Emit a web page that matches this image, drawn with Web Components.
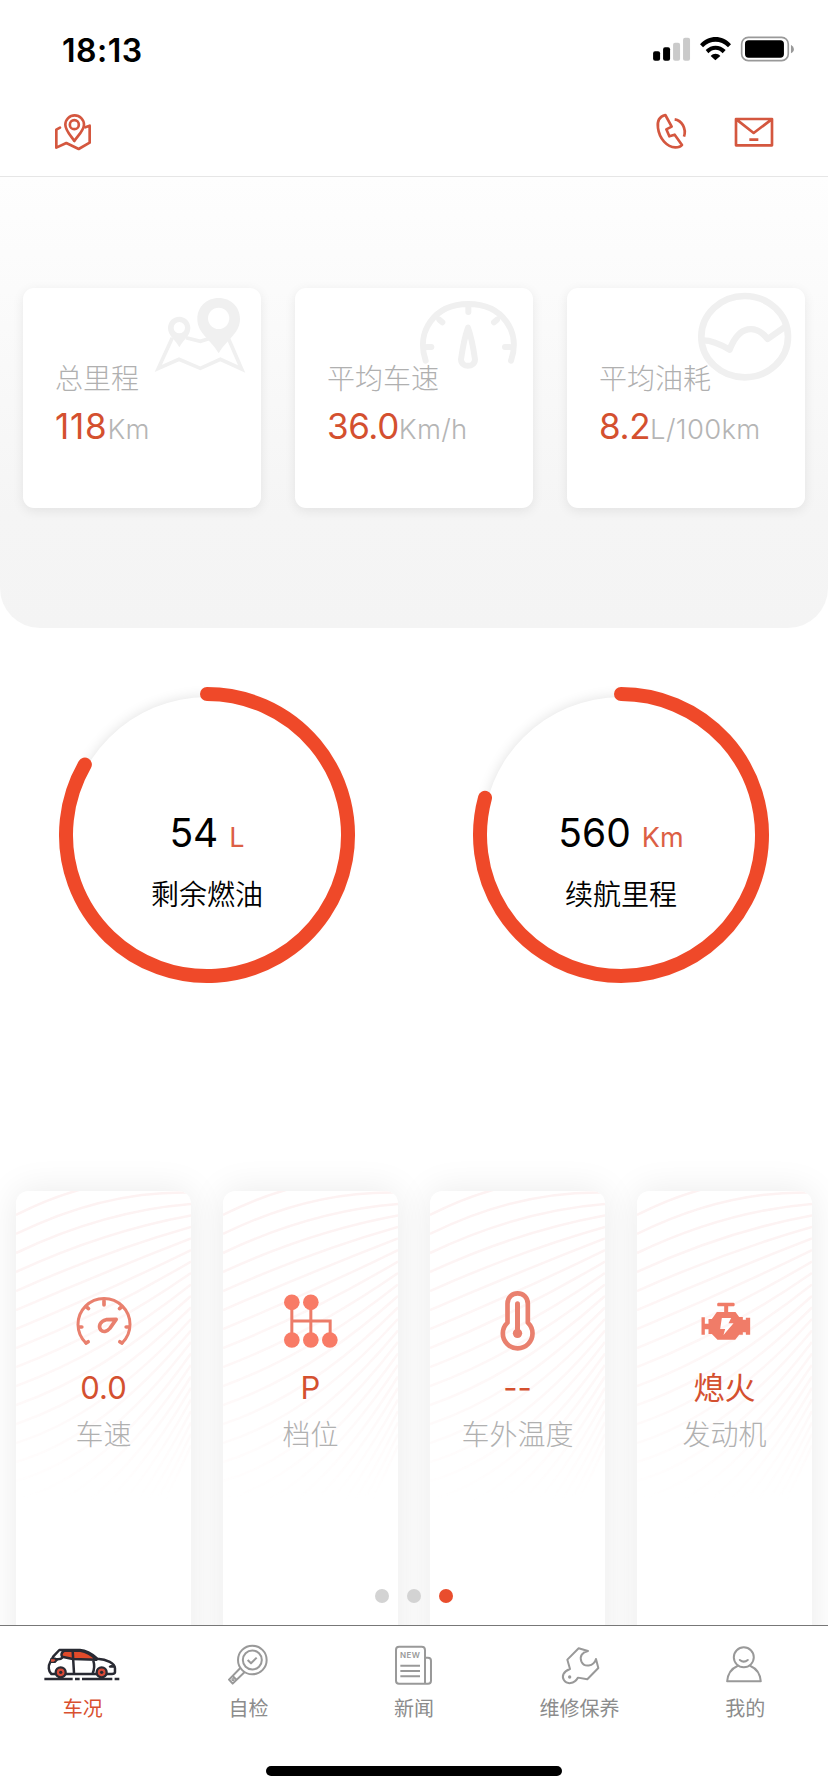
<!DOCTYPE html>
<html lang="zh-CN">
<head>
<meta charset="utf-8">
<title>车况</title>
<style>
html,body{margin:0;padding:0;background:#fff}
body{width:828px;height:1792px;overflow:hidden;font-family:Inter,"Noto Sans CJK SC",sans-serif}
svg{display:block}
</style>
</head>
<body>
<car-app>
  <status-bar slot="top" time="18:13"></status-bar>
  <nav-bar slot="top">
    <svg slot="left" width="40" height="40" viewBox="159 335 120 120" fill="none" stroke="#d4573f" stroke-width="8" stroke-linejoin="round" stroke-linecap="round"><path d="M223 422C214 408 196 390 196 373a28 28 0 0 1 56 0C252 390 232 408 223 422Z"/><circle cx="223" cy="373" r="13.500"/><path d="M180 382 169 388V442L199 428 236 446 269 427V376L256 381"/></svg>
    <svg slot="right" width="40" height="40" viewBox="155 335 120 120" fill="none" stroke="#d4573f" stroke-width="8" stroke-linejoin="round" stroke-linecap="butt"><path d="M195 344C178 348 170 362 173 383C177 415 200 440 225 441C235 441 242 438 245 434L223 403 207 408 198 387 214 379Z"/><path d="M223 357C244 360 259 384 251 409"/></svg>
    <svg slot="right" width="40" height="40" viewBox="402 335 120 120" fill="none" stroke="#d4573f" stroke-width="8" stroke-linejoin="round"><path d="M408 356H516V435H408ZM410 358 461 398 514 358M448 418H475"/></svg>
  </nav-bar>
  <stat-panel slot="main">
    <stat-card label="总里程" value="118" unit="Km" style="--track:.8px">
      <svg viewBox="68 54 714 660" fill="#f0f0f0"><path fill-rule="evenodd" d="M655 84C618 84 591 111 591 147C591 190 631 207 655 250C680 207 719 190 719 147C719 111 692 84 655 84ZM655 113a32 32 0 1 1 0 64a32 32 0 1 1 0-64Z"/><path fill-rule="evenodd" d="M537 140C517 140 503 155 503 174C503 198 525 207 537 232C550 207 570 198 570 174C570 155 556 140 537 140ZM537 156a17 17 0 1 1 0 34a17 17 0 1 1 0-34Z"/><path fill="none" stroke="#f0f0f0" stroke-width="11" d="M516 203 474 295 536 268 600 295 660 268 724 297 684 205M557 203 600 214 625 206"/></svg>
    </stat-card>
    <stat-card label="平均车速" value="36.0" unit="Km/h">
      <svg viewBox="-315 54 714 660" fill="none" stroke="#f0f0f0" stroke-width="18" stroke-linecap="round"><path d="M77 272C47 185 103 102 205 102C307 102 364 185 333 272M205 106V126M118 149 127 157M291 149 282 157M81 231H94M329 231H315"/><path stroke-width="18" stroke-linejoin="round" d="M204 173C196 195 187 240 183 268C184 294 224 294 225 268C221 240 212 195 204 173Z"/></svg>
    </stat-card>
    <stat-card label="平均油耗" value="8.2" unit="L/100km">
      <svg viewBox="501 54 714 660" fill="none" stroke="#f0f0f0" stroke-width="20"><ellipse cx="1034" cy="200" rx="130" ry="122"/><path stroke-width="19" stroke-linejoin="round" d="M910 211C936 211 960 222 989 239C1018 164 1068 163 1103 207L1156 170"/></svg>
    </stat-card>
  </stat-panel>
  <gauge-row slot="main">
    <ring-gauge value="54" unit="L" label="剩余燃油" degrees="300"></ring-gauge>
    <ring-gauge value="560" unit="Km" label="续航里程" degrees="285.300"></ring-gauge>
  </gauge-row>
  <info-row slot="main">
    <info-card value="0.0" label="车速">
      <svg width="60" height="60" viewBox="220.500 394 180 180" fill="none" stroke="#e9806e" stroke-width="9" stroke-linecap="round"><path d="M256 550A78 78 0 1 1 365 550"/><path d="M257 550 263 546M364 550 358 546M310.500 423V436M258 442 264 447M363 442 357 447M237 502H244M384 502H377" stroke-width="11"/><path d="M347 479 317 480C299 484 292 500 301 511C310 520 321 514 328 506Z" stroke-width="11" stroke-linejoin="round"/></svg>
    </info-card>
    <info-card value="P" label="档位">
      <svg width="60" height="60" viewBox="841.500 394 180 180" fill="#f87b66"><path d="M874 427V541M931 427V541M874 484H989V541" fill="none" stroke="#ec7c69" stroke-width="9"/><circle cx="874" cy="428" r="23.500"/><circle cx="931" cy="428" r="23.500"/><circle cx="874" cy="541" r="23.500"/><circle cx="931" cy="541" r="23.500"/><circle cx="988" cy="541" r="23.500"/></svg>
    </info-card>
    <info-card value="--" label="车外温度">
      <svg width="60" height="60" viewBox="220.500 394 180 180" fill="none" stroke="#e9806e" stroke-width="14"><path d="M279 489V432C279 391 340 391 340 432V489A44.500 44.500 0 1 1 279 489Z" stroke-linejoin="round"/><path d="M309 432V520" stroke-width="15" stroke-linecap="round"/><circle cx="309" cy="521" r="14" fill="#e9806e" stroke="none"/></svg>
    </info-card>
    <info-card value="熄火" label="发动机">
      <svg width="60" height="60" viewBox="841.500 394 180 180" fill="#f07c68"><path fill-rule="evenodd" d="M911 429H957C962 429 962 440 957 440H941V457H963L974 472H985V480H994V474H1007V525H994V518H985V525H974L962 540H909L892 523H882V509H871V525H861V473H871V492H882V478H892L907 457H929V440H911C907 440 907 429 911 429ZM922 475H950L942 491H957L927 526L932 508H917Z"/></svg>
    </info-card>
    <page-dots slot="dots"></page-dots>
  </info-row>
  <tab-bar slot="bottom">
    <tab-item label="车况" active>
      <svg width="80" height="43.300" viewBox="128 217 240 130"><g fill="none" stroke="#292a33" stroke-width="7.500" stroke-linejoin="round"><path fill="#fff" d="M177 238H239C262 239 280 254 291 264C320 266 344 278 344 293V305Q343 310 335 310H153C144 302 143 286 149 276L159 257Z"/><path fill="#e14b2b" d="M192 240H240C263 243 280 258 289 267L217 265 185 258C181 252 184 245 192 240Z"/><path d="M217 240 221 308M186 261Q179 269 160 264M279 270Q285 290 277 308"/></g><path fill="#292a33" d="M150 263 166 261 173 269 165 277H149ZM325 288C329 282 337 282 344 287V291H328Z"/><path fill="#d9523d" d="M152 266H162L165 269 160 273H152Z"/><g fill="#d94a38" stroke="#292a33" stroke-width="7"><circle cx="181" cy="305" r="15"/><circle cx="304" cy="305" r="15"/></g><circle cx="181" cy="305" r="5" fill="#292a33"/><circle cx="304" cy="305" r="5" fill="#292a33"/><path d="M132 325H217M224 325H238M245 325H336M343 325H357" stroke="#292a33" stroke-width="8"/></svg>
    </tab-item>
    <tab-item label="自检">
      <svg width="80" height="43.300" viewBox="625 217 240 130" fill="none" stroke="#999" stroke-width="6" stroke-linejoin="round"><circle cx="758" cy="268" r="43"/><circle cx="758" cy="268" r="28.500"/><path d="M744 268 754 278 771 261M722 292 688 327 699 339 735 304M699 316 710 327"/><circle cx="700" cy="327" r="2"/></svg>
    </tab-item>
    <tab-item label="新闻">
      <svg width="80" height="43.300" viewBox="1122 217 240 130" fill="none" stroke="#999" stroke-width="6" stroke-linejoin="round"><path d="M1197 228H1265Q1275 228 1275 238V339H1197Q1188 339 1188 330V237Q1188 228 1197 228ZM1275 261H1284Q1293 261 1293 270V330Q1293 339 1284 339H1268"/><path d="M1201 285H1260M1201 301H1260M1201 317H1260"/><text x="1200" y="261" font-family="Inter,sans-serif" font-size="24" font-weight="600" textLength="60" stroke="none" fill="#999">NEW</text></svg>
    </tab-item>
    <tab-item label="维修保养">
      <svg width="80" height="43.300" viewBox="377 217 240 130" fill="none" stroke="#999" stroke-width="6" stroke-linejoin="round"><path d="M521 241 493 233 459 267 467 295C447 302 441 317 449 329C458 342 479 341 491 321L519 326 552 292 545 265C538 289 509 291 501 272C495 256 504 245 521 241Z"/><circle cx="466" cy="319" r="5" fill="#999" stroke="none"/></svg>
    </tab-item>
    <tab-item label="我的">
      <svg width="80" height="43.300" viewBox="873.600 217 240 130" fill="none" stroke="#999" stroke-width="6" stroke-linejoin="round" stroke-linecap="round"><circle cx="990" cy="260" r="30"/><path d="M978 268Q990 278 1002 268M971 286Q943 298 940 332H1041Q1038 298 1010 286"/></svg>
    </tab-item>
  </tab-bar>
</car-app>
<script>
const define = (name, render) => customElements.define(name, class extends HTMLElement {
  constructor() { super(); this.attachShadow({ mode: 'open' }); }
  connectedCallback() { this.shadowRoot.innerHTML = render(this); }
});
const at = (el, name) => el.getAttribute(name);

define('car-app', () => `<style>
:host{display:flex;flex-direction:column;width:828px;height:1792px;background:#fff;overflow:hidden}
main{display:flex;flex-direction:column;height:1448px;overflow:hidden}
</style><slot name="top"></slot><main><slot name="main"></slot></main><slot name="bottom"></slot>`);

define('status-bar', el => `<style>
:host{display:flex;height:88px;box-sizing:border-box;padding:12px 31px 0 62px;justify-content:space-between;align-items:center}
time{font-size:32px;font-weight:600;color:#000;line-height:40px;letter-spacing:.5px;padding-top:1px}
</style><time>${at(el, 'time')}</time>
<svg width="146.700" height="33.300" viewBox="150 100 440 100"><rect x="159" y="155" width="21" height="28" rx="6"/><rect x="189" y="143" width="21" height="40" rx="6"/><g fill="#cacaca"><rect x="219" y="129" width="21" height="54" rx="6"/><rect x="249" y="114" width="21" height="69" rx="6"/></g>
<path d="M346 182 332 169C340 160 353 160 361 169ZM317 151C334 134 359 134 377 151L368 161C355 147 338 147 325 161ZM300 134C327 105 367 105 393 134L384 143C361 121 332 121 309 143Z"/>
<rect x="425" y="113" width="140" height="70" rx="20" fill="none" stroke="#999" stroke-width="5"/><rect x="435" y="122" width="117" height="52" rx="11"/><path d="M573 135Q582 140 582 148Q582 157 573 161Z" fill="#999"/></svg>`);

define('nav-bar', () => `<style>
:host{display:flex;height:88px;padding:0 54px 0 53px;align-items:center;justify-content:space-between;border-bottom:1px solid #e6e6e6}
div{display:flex;gap:42px}
</style><div><slot name="left"></slot></div><div><slot name="right"></slot></div>`);

define('stat-panel', () => `<style>
:host{display:flex;flex:none;box-sizing:border-box;height:451px;padding:111px 23px 0;gap:34px;align-items:flex-start;background:linear-gradient(#fefefe,#f8f8f8 50%,#f5f5f5 75%,#f4f4f4);border-radius:0 0 40px 40px}
</style><slot></slot>`);

define('stat-card', el => `<style>
:host{display:block;position:relative;box-sizing:border-box;width:238px;height:220px;padding:71px 0 0 32px;background:#fff;border-radius:11px;box-shadow:0 3px 12px rgba(0,0,0,.08)}
.art{position:absolute;inset:0}
.label{position:relative;font-size:28px;line-height:40px;font-weight:300;color:#b0b0b0}
.value{position:relative;display:flex;align-items:baseline;line-height:44px;margin-top:5px;white-space:nowrap;color:#d4502f;font-size:35px;letter-spacing:var(--track,-.4px)}
small{font-size:27.500px;font-weight:350;color:#b5b5b5;letter-spacing:.3px}
</style><div class="art"><slot></slot></div><div class="label">${at(el, 'label')}</div><div class="value">${at(el, 'value')}<small>${at(el, 'unit')}</small></div>`);

define('gauge-row', () => `<style>:host{display:grid;flex:none;grid-template-columns:1fr 1fr;justify-items:center;height:563px;padding-top:57px;box-sizing:border-box}</style><slot></slot>`);

define('ring-gauge', el => {
  const r = 141, a = at(el, 'degrees') * Math.PI / 180;
  const x = 150 + r * Math.sin(a), y = 150 - r * Math.cos(a);
  return `<style>
:host{display:grid;width:300px;height:300px}
:host>*{grid-area:1/1}
.disc{width:276px;height:276px;margin:12px;border-radius:50%;background:#fff;box-shadow:0 0 13px rgba(0,0,0,.12)}
.text{display:flex;flex-direction:column;align-items:center;padding-top:123px;z-index:1}
.value{display:flex;align-items:baseline;font-size:39px;font-weight:400;line-height:50px;color:#000}
small{font-size:27px;font-weight:400;color:#dc5f45;margin-left:11px}
.label{font-size:28px;line-height:40px;margin-top:12px;color:#000;font-weight:350}
</style><div class="disc"></div>
<svg width="300" height="300" viewBox="0 0 300 300"><path d="M150 9A141 141 0 1 1 ${x} ${y}" fill="none" stroke="#ef4929" stroke-width="14" stroke-linecap="round"/></svg>
<div class="text"><div class="value">${at(el, 'value')}<small>${at(el, 'unit')}</small></div><div class="label">${at(el, 'label')}</div></div>`;
});

define('info-row', () => `<style>
:host{position:relative;display:flex;flex:none;gap:32px;padding:0 16px}
.dots{position:absolute;left:0;right:0;top:398px;display:flex;justify-content:center}
</style><slot></slot><div class="dots"><slot name="dots"></slot></div>`);

// Fine contour lines that start as shallow arches and bend into steep sweeps.
const contours = Array.from({ length: 24 }, (_, i) => {
  const left = 24 + 19 * i, right = -10 + 11.500 * i, bow = -14 + 2.600 * i;
  return `<path d="M0 ${left}Q88 ${(left + right) / 2 + bow * 2} 175 ${right}"/>`;
}).join('');

define('info-card', el => `<style>
:host{display:block;position:relative;width:175px;height:520px;background:#fff;border-radius:12px;box-shadow:0 0 36px rgba(0,0,0,.085)}
.art{position:absolute;inset:0;overflow:hidden;border-radius:12px;-webkit-mask:linear-gradient(#000,#0008 200px,transparent 310px);mask:linear-gradient(#000,#0008 200px,transparent 310px)}
.body{position:relative;display:flex;flex-direction:column;align-items:center;padding-top:100px}
.value{font-size:31px;line-height:40px;margin-top:17px;color:#d4502f;font-weight:400}
.label{font-size:28px;line-height:40px;margin-top:7px;color:#b0b0b0;font-weight:300}
</style><div class="art"><svg width="175" height="470" fill="none" stroke="#fdf2f2" stroke-width="2.500">${contours}</svg></div>
<div class="body"><slot></slot><div class="value">${at(el, 'value')}</div><div class="label">${at(el, 'label')}</div></div>`);

define('page-dots', () => `<style>
:host{display:flex;gap:18px}i{width:14px;height:14px;border-radius:50%;background:#d3d3d3}i:last-child{background:#e94d2d}
</style><i></i><i></i><i></i>`);

define('tab-bar', () => `<style>
:host{display:flex;flex-direction:column;height:167px;box-sizing:border-box;border-top:1px solid #777;background:#fff;align-items:center}
nav{display:grid;grid-template-columns:repeat(5,1fr);width:828px;height:140px;padding-top:17px;box-sizing:border-box}
.home{width:296px;height:10px;border-radius:5px;background:#000}
</style><nav><slot></slot></nav><div class="home"></div>`);

define('tab-item', el => `<style>
:host{display:flex;flex-direction:column;align-items:center;color:#8c8c8c}
:host([active]){color:#d9502f}
span{font-size:20px;line-height:28px;margin-top:9px}
</style><slot></slot><span>${at(el, 'label')}</span>`);
</script>
</body>
</html>
